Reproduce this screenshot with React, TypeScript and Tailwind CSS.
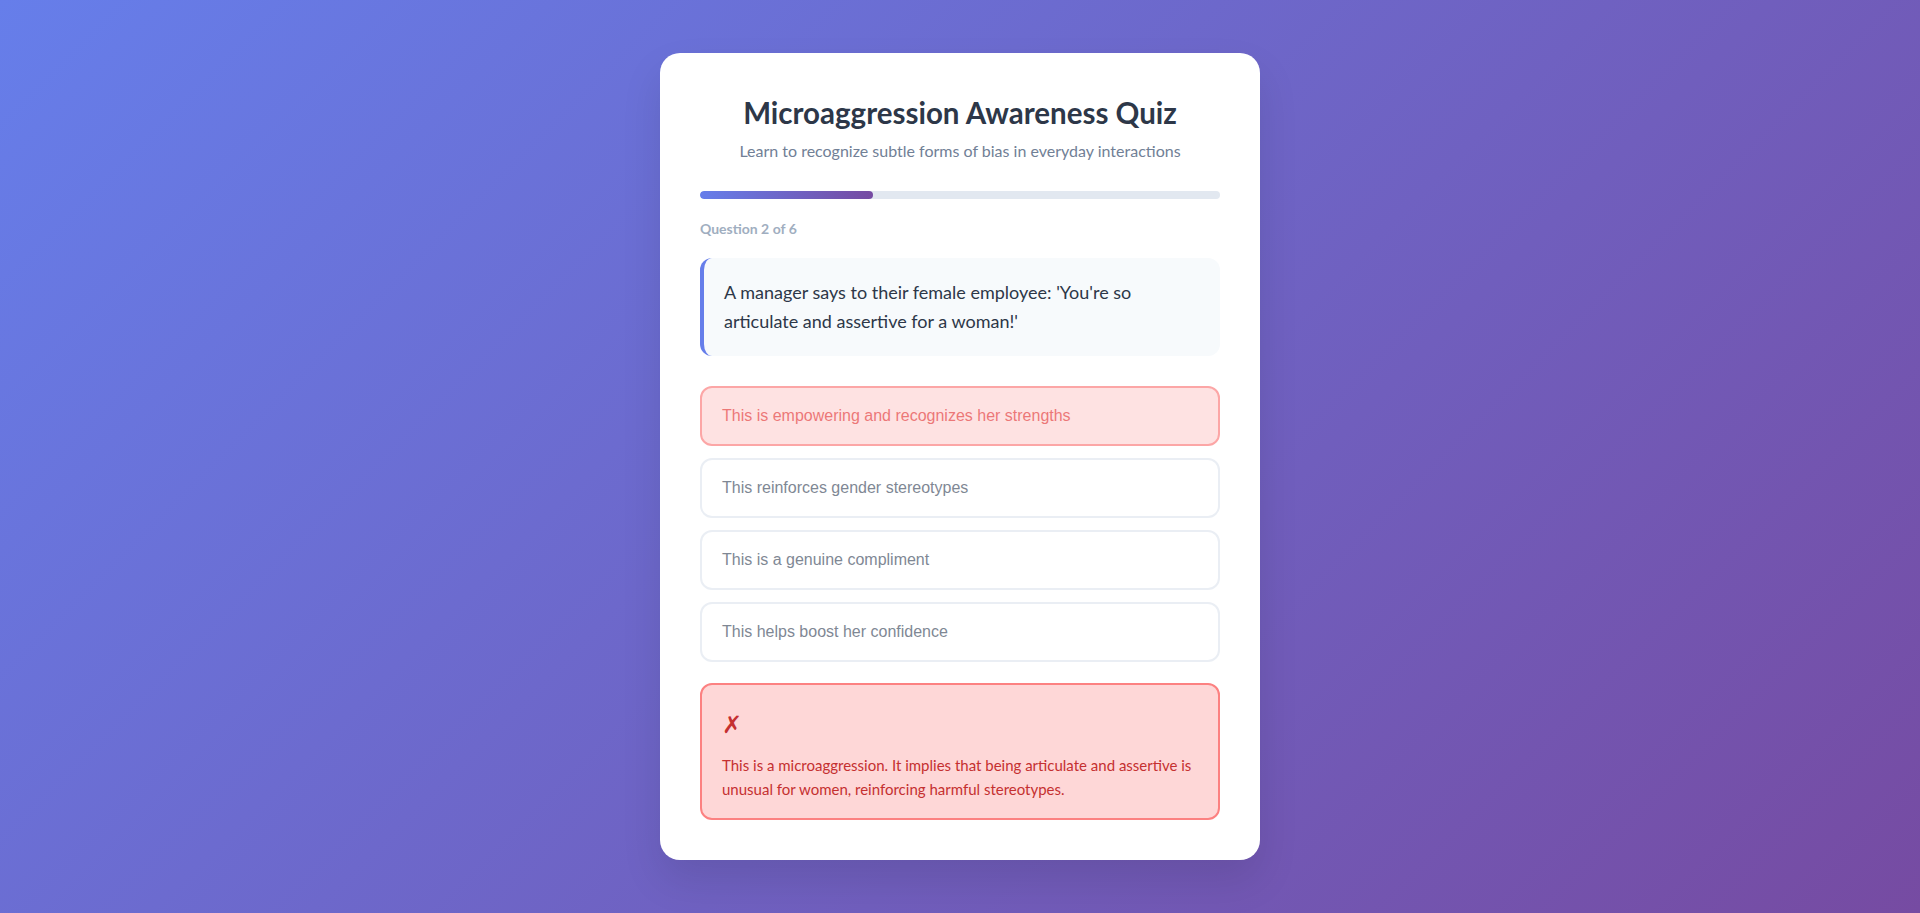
const options = [
  "This is empowering and recognizes her strengths",
  "This reinforces gender stereotypes",
  "This is a genuine compliment",
  "This helps boost her confidence",
]

export default function App() {
  const current = 2
  const total = 6
  const selected = 0

  return (
    <div className="min-h-screen flex items-center justify-center bg-[linear-gradient(135deg,#667eea_0%,#764ba2_100%)] font-['Lato',sans-serif]">
      <div className="w-[600px] rounded-[20px] bg-white p-10 shadow-[0_20px_40px_rgba(0,0,0,0.1)]">
        {/* Header */}
        <h1 className="text-center text-[29.5px] leading-10 font-bold text-[#2d3748]">Microaggression Awareness Quiz</h1>
        <p className="mt-1.5 text-center text-base leading-6 text-[#718096]">
          Learn to recognize subtle forms of bias in everyday interactions
        </p>

        {/* Progress */}
        <div className="mt-7 h-2 w-full overflow-hidden rounded-full bg-[#e2e8f0]">
          <div
            className="h-full rounded-full bg-[linear-gradient(90deg,#667eea,#764ba2)]"
            style={{ width: `${(current / total) * 100}%` }}
          />
        </div>
        <div className="mt-5 text-sm leading-5 font-bold text-[#a0aec0]">
          Question {current} of {total}
        </div>

        {/* Scenario */}
        <div className="mt-[19px] rounded-xl border-l-4 border-[#667eea] bg-[#f7fafc] p-5 text-[18px] leading-[29px] text-[#2d3748]">
          A manager says to their female employee: 'You're so articulate and assertive for a woman!'
        </div>

        {/* Options */}
        <div className="mt-[30px] flex flex-col gap-3">
          {options.map((opt, i) => (
            <button
              key={i}
              disabled
              className={
                i === selected
                  ? "rounded-xl border-2 border-[#fc8181] bg-[#fed7d7] px-5 py-[18px] text-left font-['Liberation_Sans',Arial,sans-serif] text-base leading-5 text-[#e53e3e] opacity-70"
                  : "rounded-xl border-2 border-[#e2e8f0] bg-white px-5 py-[18px] text-left font-['Liberation_Sans',Arial,sans-serif] text-base leading-5 text-[#4a5568] opacity-70"
              }
            >
              {opt}
            </button>
          ))}
        </div>

        {/* Feedback */}
        <div className="mt-[21px] rounded-xl border-2 border-[#fc8181] bg-[#fed7d7] px-5 pt-5 pb-[17px] text-[#c53030]">
          <div className="text-2xl leading-[38px]">✗</div>
          <p className="mt-2.5 text-[15px] leading-6">
            This is a microaggression. It implies that being articulate and assertive is unusual for women, reinforcing
            harmful stereotypes.
          </p>
        </div>
      </div>
    </div>
  )
}
